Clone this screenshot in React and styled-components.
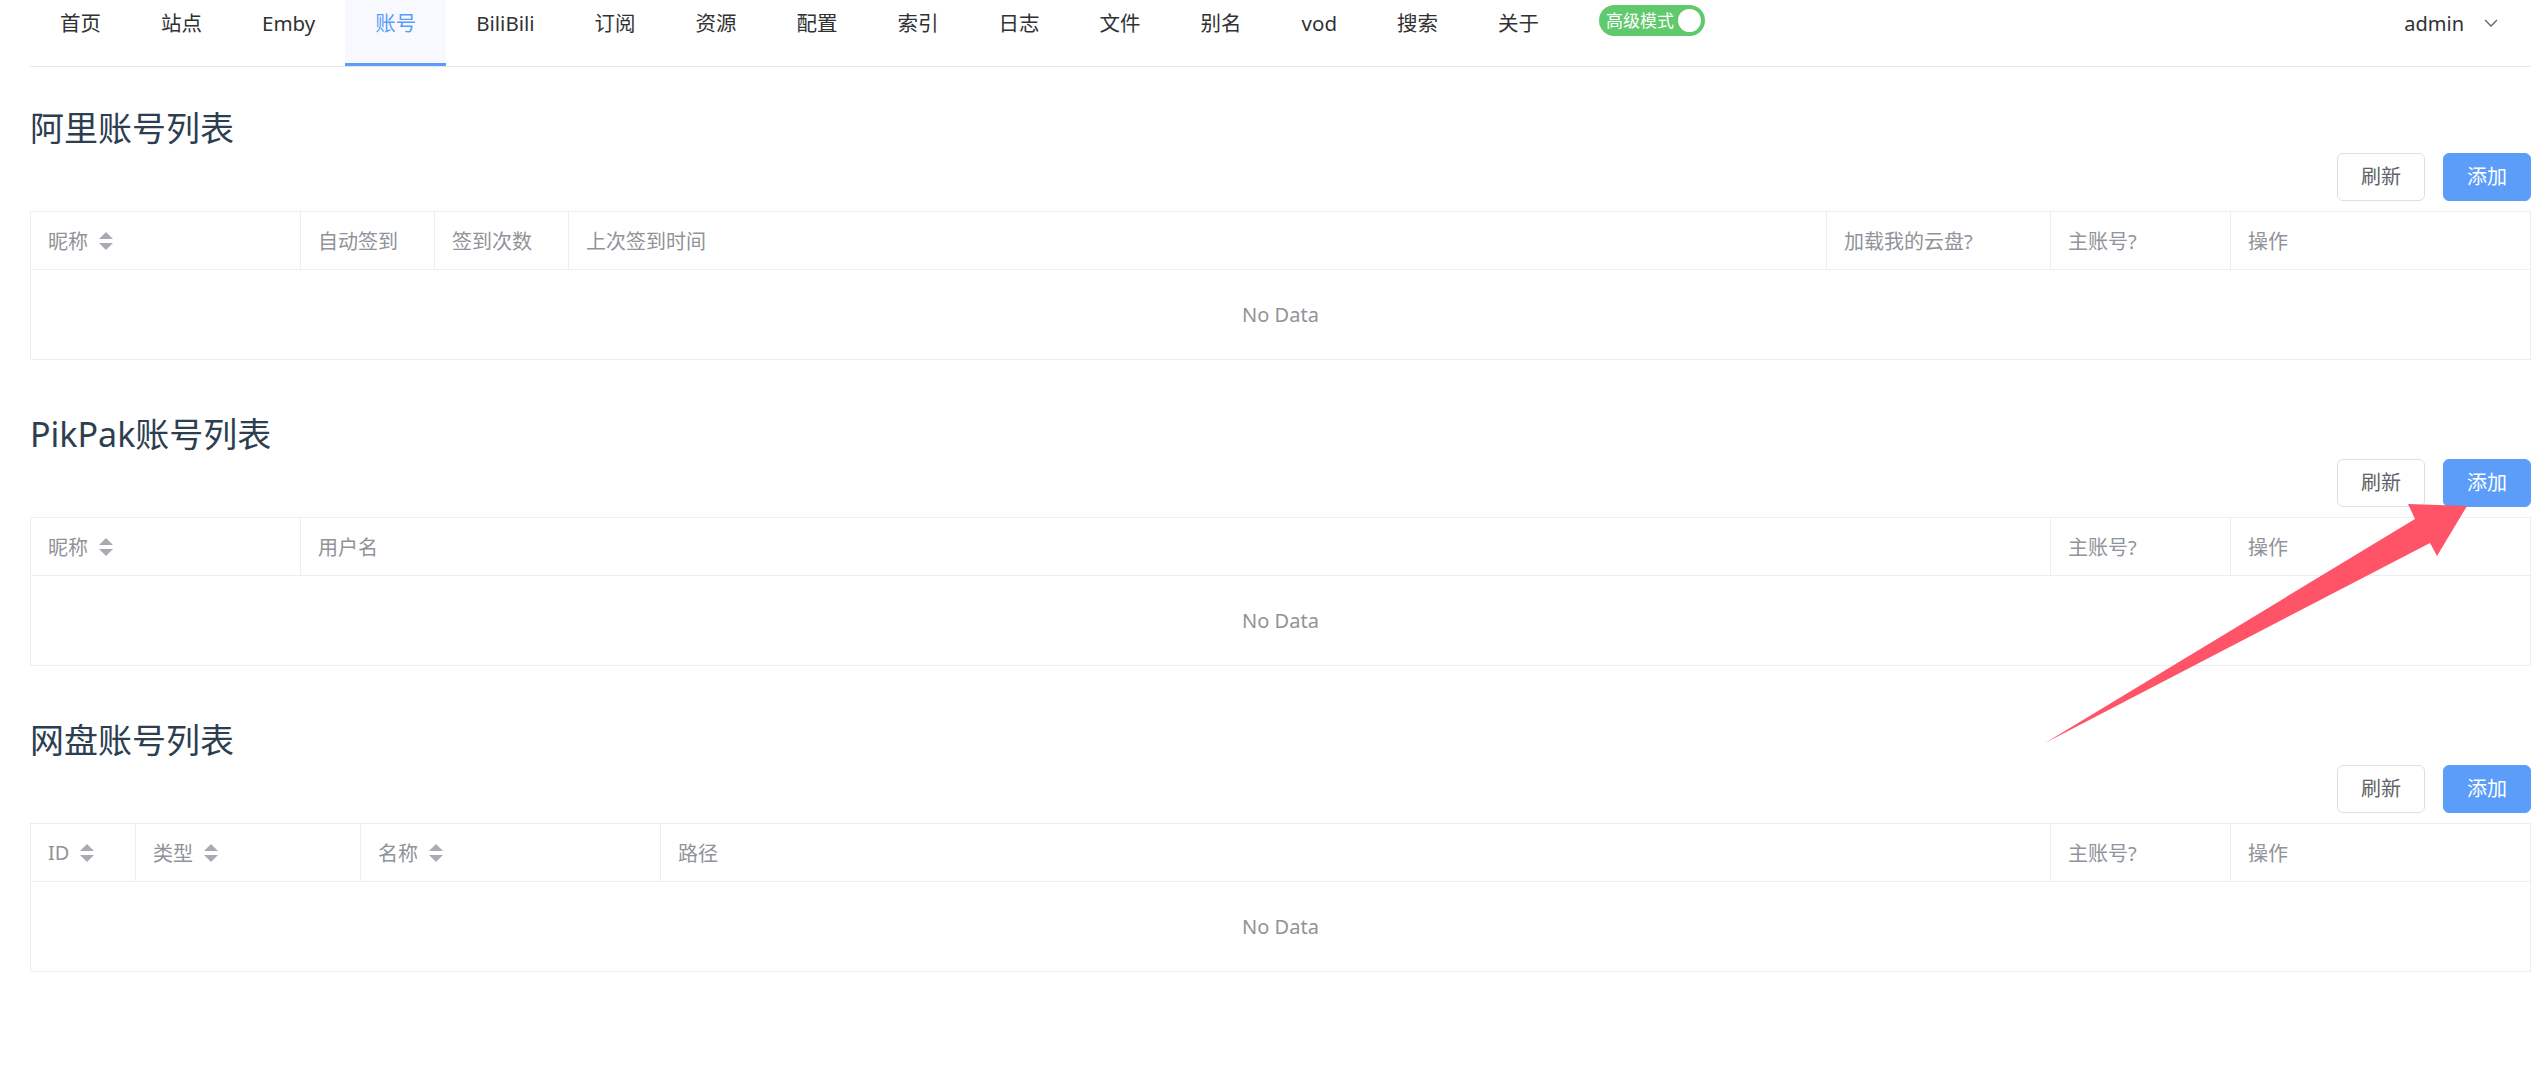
import React from "react";
import styled, { createGlobalStyle } from "styled-components";

const GlobalStyle = createGlobalStyle`
  html, body {
    margin: 0;
    padding: 0;
    background: #ffffff;
  }
  body {
    font-family: "Noto Sans", "Noto Sans CJK SC", sans-serif;
    color: #303133;
  }
  * { box-sizing: border-box; }
`;

const Page = styled.div`
  position: relative;
  min-height: 1065px;
  padding: 0 15px 0 30px;
`;

const Nav = styled.nav`
  display: flex;
  align-items: flex-start;
  height: 67px;
  border-bottom: 1px solid #e4e7ed;
`;

const NavItem = styled.div`
  height: 66px;
  padding: 0 30px;
  font-size: 20.5px;
  line-height: 46px;
  white-space: nowrap;
  color: ${(p) => (p.$active ? "#5b9df9" : "#303133")};
  background: ${(p) => (p.$active ? "#f8f9ff" : "transparent")};
  border-bottom: 3px solid ${(p) => (p.$active ? "#5b9df9" : "transparent")};
`;

const SwitchItem = styled.div`
  height: 66px;
  padding: 5px 30px 0;
`;

const Switch = styled.span`
  display: inline-flex;
  align-items: center;
  gap: 4px;
  height: 31px;
  padding: 0 4px 0 7px;
  border-radius: 16px;
  background: #5fc96c;
  color: #ffffff;
  font-size: 17px;
  line-height: 31px;
`;

const Knob = styled.span`
  width: 23px;
  height: 23px;
  border-radius: 50%;
  background: #ffffff;
`;

const UserMenu = styled.div`
  margin-left: auto;
  display: flex;
  align-items: center;
  gap: 20px;
  height: 46px;
  padding: 0 33px 0 30px;
  font-size: 20px;
  color: #303133;
`;

const Section = styled.section`
  margin-top: ${(p) => (p.$first ? "41px" : "54px")};
`;

const Title = styled.h2`
  margin: 0;
  font-size: 34px;
  line-height: 40px;
  font-weight: 400;
  color: #2c3e50;
`;

const Toolbar = styled.div`
  display: flex;
  justify-content: flex-end;
  gap: 18px;
  margin-top: 5px;
`;

const Button = styled.button`
  height: 48px;
  padding: 0 23px;
  border-radius: 6px;
  font-family: inherit;
  font-size: 20px;
  line-height: 46px;
  cursor: pointer;
  border: 1px solid ${(p) => (p.$primary ? "#5b9df9" : "#dcdfe6")};
  background: ${(p) => (p.$primary ? "#5b9df9" : "#ffffff")};
  color: ${(p) => (p.$primary ? "#ffffff" : "#606266")};
`;

const Table = styled.div`
  margin-top: 10px;
  display: grid;
  grid-template-columns: ${(p) => p.$cols};
  border: 1px solid #ebeef5;
`;

const HeadCell = styled.div`
  display: flex;
  align-items: center;
  gap: 11px;
  height: 58px;
  padding: 0 17px;
  border-bottom: 1px solid #ebeef5;
  border-right: 1px solid #ebeef5;
  font-size: 20px;
  color: #909399;
  white-space: nowrap;
  &:nth-last-child(2) {
    border-right: none;
  }
`;

const Empty = styled.div`
  grid-column: 1 / -1;
  height: 89px;
  display: flex;
  align-items: center;
  justify-content: center;
  font-size: 20px;
  color: #909399;
`;

const ArrowLayer = styled.svg`
  position: absolute;
  top: 0;
  left: 0;
  pointer-events: none;
`;

const SortIcon = () => (
  <svg width="14" height="18" viewBox="0 0 14 18">
    <polygon points="0,7 7,0 14,7" fill="#a8abb2" />
    <polygon points="0,11 14,11 7,18" fill="#a8abb2" />
  </svg>
);

const Chevron = () => (
  <svg width="14" height="8" viewBox="0 0 14 8">
    <polyline points="1,1 7,7 13,1" fill="none" stroke="#606266" strokeWidth="1.3" />
  </svg>
);

const navItems = ["首页", "站点", "Emby", "账号", "BiliBili", "订阅", "资源", "配置", "索引", "日志", "文件", "别名", "vod", "搜索", "关于"];

const sections = [
  {
    title: "阿里账号列表",
    cols: "270px 134px 134px 1fr 224px 180px 299px",
    heads: [
      { t: "昵称", s: true },
      { t: "自动签到" },
      { t: "签到次数" },
      { t: "上次签到时间" },
      { t: "加载我的云盘?" },
      { t: "主账号?" },
      { t: "操作" },
    ],
  },
  {
    title: "PikPak账号列表",
    cols: "270px 1fr 180px 299px",
    heads: [{ t: "昵称", s: true }, { t: "用户名" }, { t: "主账号?" }, { t: "操作" }],
  },
  {
    title: "网盘账号列表",
    cols: "105px 225px 300px 1fr 180px 299px",
    heads: [
      { t: "ID", s: true },
      { t: "类型", s: true },
      { t: "名称", s: true },
      { t: "路径" },
      { t: "主账号?" },
      { t: "操作" },
    ],
  },
];

export default function App() {
  return (
    <>
      <GlobalStyle />
      <Page>
        <Nav>
          {navItems.map((n) => (
            <NavItem key={n} $active={n === "账号"}>
              {n}
            </NavItem>
          ))}
          <SwitchItem>
            <Switch>
              高级模式
              <Knob />
            </Switch>
          </SwitchItem>
          <UserMenu>
            admin
            <Chevron />
          </UserMenu>
        </Nav>

        {sections.map((sec, i) => (
          <Section key={sec.title} $first={i === 0}>
            <Title>{sec.title}</Title>
            <Toolbar>
              <Button>刷新</Button>
              <Button $primary>添加</Button>
            </Toolbar>
            <Table $cols={sec.cols}>
              {sec.heads.map((h) => (
                <HeadCell key={h.t}>
                  {h.t}
                  {h.s && <SortIcon />}
                </HeadCell>
              ))}
              <Empty>No Data</Empty>
            </Table>
          </Section>
        ))}

        <ArrowLayer width="2546" height="1065" viewBox="0 0 2546 1065">
          <polygon
            points="2045,743 2415,519 2408,504 2467,506 2437,556 2430,543"
            fill="#ff5468"
          />
        </ArrowLayer>
      </Page>
    </>
  );
}
